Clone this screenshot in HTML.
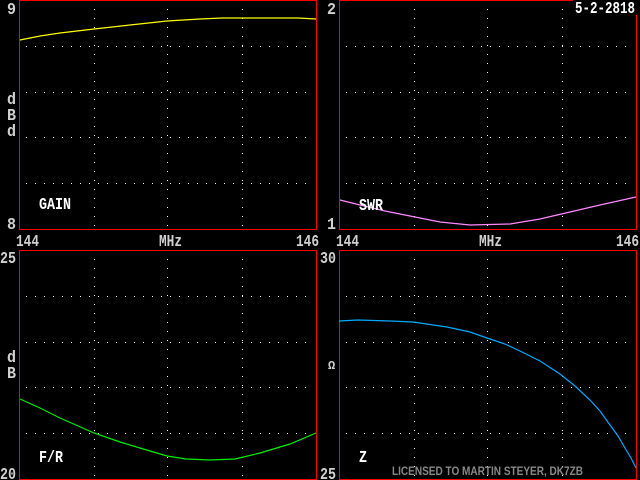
<!DOCTYPE html>
<html><head><style>
html,body{margin:0;padding:0;background:#000;width:640px;height:480px;overflow:hidden}
svg{display:block}
text{font-family:"Liberation Mono","DejaVu Sans Mono",monospace;font-weight:bold}
</style></head><body>
<svg width="640" height="480" viewBox="0 0 640 480" xmlns="http://www.w3.org/2000/svg">
<defs>
<g id="grid">
 <g stroke="#fff" stroke-width="1" stroke-dasharray="1 8" shape-rendering="crispEdges">
  <line x1="26" y1="46.5" x2="312" y2="46.5"/>
  <line x1="26" y1="92.5" x2="312" y2="92.5"/>
  <line x1="26" y1="137.5" x2="312" y2="137.5"/>
  <line x1="26" y1="183.5" x2="312" y2="183.5"/>
 </g>
 <g stroke="#fff" stroke-width="1" stroke-dasharray="1 8" shape-rendering="crispEdges">
  <line x1="94.5" y1="9" x2="94.5" y2="226"/>
  <line x1="167.5" y1="9" x2="167.5" y2="226"/>
  <line x1="242.5" y1="9" x2="242.5" y2="226"/>
 </g>
</g>
</defs>
<g fill="none" stroke="#f00" stroke-width="1" shape-rendering="crispEdges">
 <rect x="19.5" y="0.5" width="297" height="229"/>
 <rect x="339.5" y="0.5" width="297" height="229"/>
 <rect x="19.5" y="250.5" width="297" height="229"/>
 <rect x="339.5" y="250.5" width="297" height="229"/>
</g>
<use href="#grid"/>
<use href="#grid" x="320"/>
<use href="#grid" y="250"/>
<use href="#grid" x="320" y="250"/>
<polyline fill="none" stroke="#ff0" stroke-width="1.2" points="20,40 40,36 60,33 94,29 130,25 167,21 200,19 222,18 298,18 316,19"/>
<polyline fill="none" stroke="#f8f" stroke-width="1.2" points="340,200 360,205 385,211 415,217 440,222 470,225 510,224 540,219 570,212 600,205 636,197"/>
<polyline fill="none" stroke="#0e0" stroke-width="1.2" points="20,399 40,408 60,418 94,433 120,442 150,451 167,456 186,459 210,460 235,459 260,453 290,444 316,433"/>
<polyline fill="none" stroke="#0af" stroke-width="1.2" points="339,321 358,320 390,321 413,322 447,327 470,332 487,338 505,344 520,351 540,361 560,374 575,386 590,400 600,411 610,425 618,436 625,448 631,458 636,468"/>
<g fill="#d0d0d0" font-size="17">
 <text x="7" y="14" textLength="9" lengthAdjust="spacingAndGlyphs">9</text>
 <text x="7" y="229" textLength="9" lengthAdjust="spacingAndGlyphs">8</text>
 <text x="7" y="104" textLength="9" lengthAdjust="spacingAndGlyphs">d</text>
 <text x="7" y="120" textLength="9" lengthAdjust="spacingAndGlyphs">B</text>
 <text x="7" y="136" textLength="9" lengthAdjust="spacingAndGlyphs">d</text>
 <text x="16" y="246" textLength="23" lengthAdjust="spacingAndGlyphs">144</text>
 <text x="159" y="246" textLength="23" lengthAdjust="spacingAndGlyphs">MHz</text>
 <text x="296" y="246" textLength="23" lengthAdjust="spacingAndGlyphs">146</text>
 <text x="327" y="14" textLength="9" lengthAdjust="spacingAndGlyphs">2</text>
 <text x="327" y="229" textLength="9" lengthAdjust="spacingAndGlyphs">1</text>
 <text x="336" y="246" textLength="23" lengthAdjust="spacingAndGlyphs">144</text>
 <text x="479" y="246" textLength="23" lengthAdjust="spacingAndGlyphs">MHz</text>
 <text x="616" y="246" textLength="23" lengthAdjust="spacingAndGlyphs">146</text>
 <text x="0" y="263" textLength="16" lengthAdjust="spacingAndGlyphs">25</text>
 <text x="0" y="479" textLength="16" lengthAdjust="spacingAndGlyphs">20</text>
 <text x="7" y="362" textLength="9" lengthAdjust="spacingAndGlyphs">d</text>
 <text x="7" y="378" textLength="9" lengthAdjust="spacingAndGlyphs">B</text>
 <text x="320" y="263" textLength="16" lengthAdjust="spacingAndGlyphs">30</text>
 <text x="320" y="479" textLength="16" lengthAdjust="spacingAndGlyphs">25</text>
 <text x="328" y="369" font-size="12">Ω</text>
</g>
<rect x="573" y="0" width="67" height="15" fill="#000"/>
<g fill="#fff" font-size="17">
 <text x="575" y="13" textLength="60" lengthAdjust="spacingAndGlyphs">5-2-2818</text>
 <text x="39" y="209" textLength="32" lengthAdjust="spacingAndGlyphs">GAIN</text>
 <text x="359" y="210" textLength="24" lengthAdjust="spacingAndGlyphs">SWR</text>
 <text x="39" y="462" textLength="24" lengthAdjust="spacingAndGlyphs">F/R</text>
 <text x="359" y="462" textLength="8" lengthAdjust="spacingAndGlyphs">Z</text>
</g>
<text x="392" y="475" fill="#888" font-size="12" font-weight="normal" textLength="191" lengthAdjust="spacingAndGlyphs" style="font-family:'Liberation Sans',sans-serif">LICENSED TO MARTIN STEYER, DK7ZB</text>
</svg>
</body></html>
